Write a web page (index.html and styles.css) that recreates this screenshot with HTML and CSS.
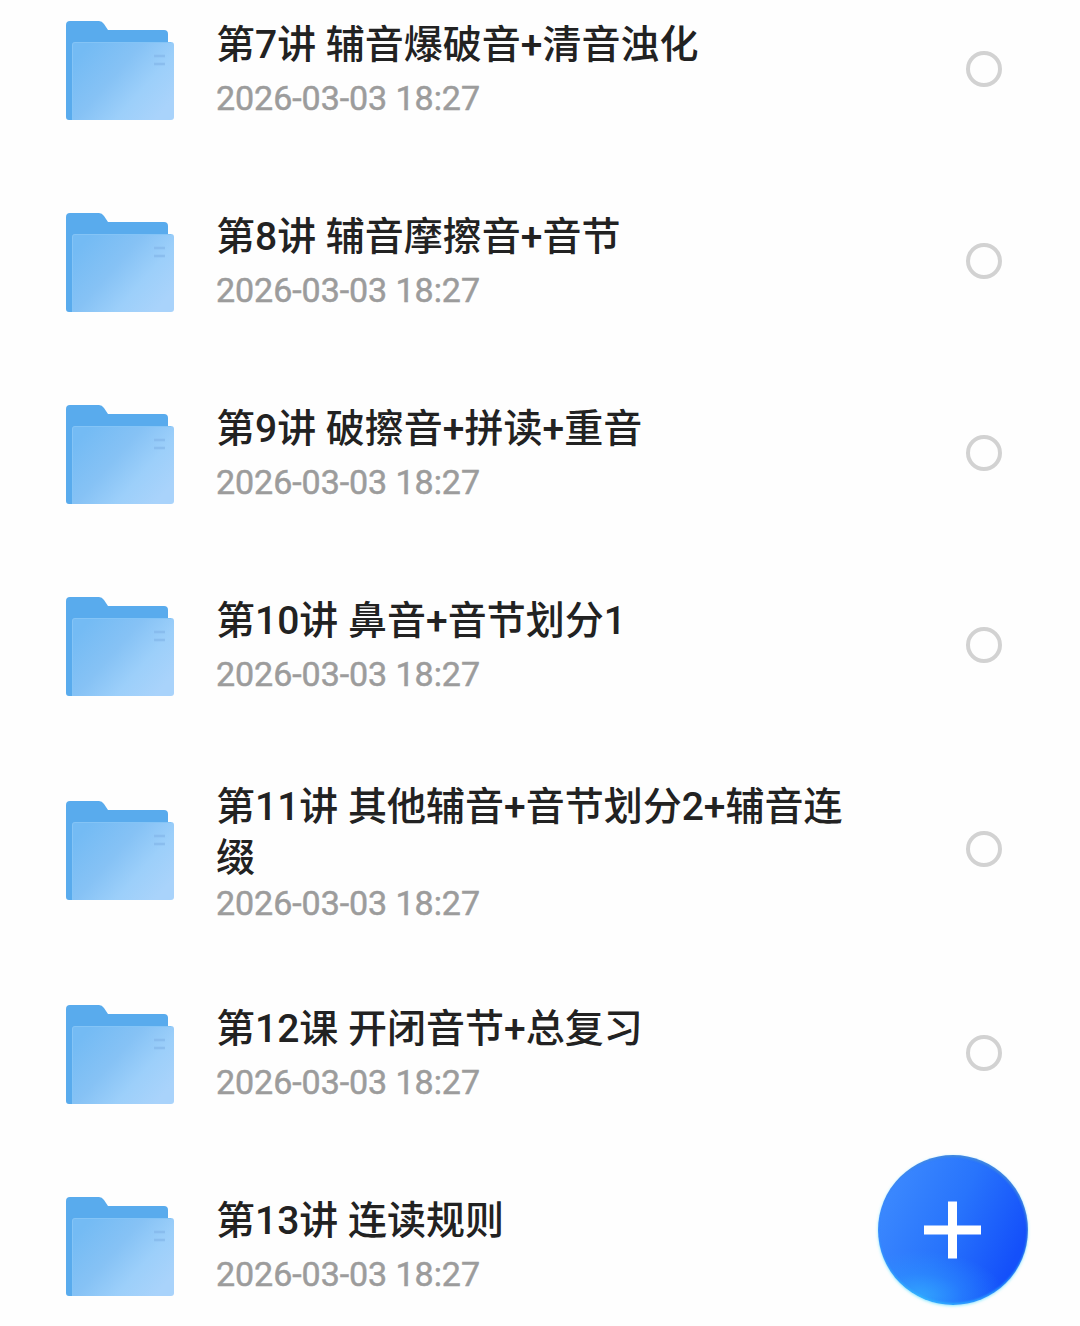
FILE: index.html
```html
<!DOCTYPE html>
<html lang="zh-CN">
<head>
  <meta charset="UTF-8">
  <title>文件列表</title>
  <link rel="stylesheet" href="styles.css">
</head>
<body>
  <svg class="defs" width="0" height="0">
    <defs>
      <linearGradient id="frontFill" x1="0.05" y1="0.2" x2="0.95" y2="0.8">
        <stop offset="0" stop-color="#74bbf4"/>
        <stop offset="0.4" stop-color="#86c2f5"/>
        <stop offset="0.7" stop-color="#9ccffa"/>
        <stop offset="1" stop-color="#a9d3fb"/>
      </linearGradient>
      <symbol id="folder" viewBox="0 0 108 100">
        <path d="M0 4Q0 0 4 0H33Q36 0 38 3L42 9H98Q102 9 102 13V99H3Q0 99 0 96Z" fill="#59abed"/>
        <path d="M6 24Q6 21 9 21H105Q108 21 108 24V96Q108 99 105 99H6Z" fill="url(#frontFill)"/>
        <path d="M6.5 99V24Q6.5 21.5 9 21.5H105" fill="none" stroke="#84c4f6" stroke-width="1"/>
        <path d="M88 35H99M88 43H99" stroke="#84b7ea" stroke-width="2.4" opacity="0.7"/>
      </symbol>
    </defs>
  </svg>

  <div class="list">
    <div class="row">
      <svg class="folder"><use href="#folder"/></svg>
      <div class="info">
        <div class="name">第7讲 辅音爆破音+清音浊化</div>
        <div class="date">2026-03-03 18:27</div>
      </div>
      <span class="check"></span>
    </div>
    <div class="row">
      <svg class="folder"><use href="#folder"/></svg>
      <div class="info">
        <div class="name">第8讲 辅音摩擦音+音节</div>
        <div class="date">2026-03-03 18:27</div>
      </div>
      <span class="check"></span>
    </div>
    <div class="row">
      <svg class="folder"><use href="#folder"/></svg>
      <div class="info">
        <div class="name">第9讲 破擦音+拼读+重音</div>
        <div class="date">2026-03-03 18:27</div>
      </div>
      <span class="check"></span>
    </div>
    <div class="row">
      <svg class="folder"><use href="#folder"/></svg>
      <div class="info">
        <div class="name">第10讲 鼻音+音节划分1</div>
        <div class="date">2026-03-03 18:27</div>
      </div>
      <span class="check"></span>
    </div>
    <div class="row row-tall">
      <svg class="folder"><use href="#folder"/></svg>
      <div class="info">
        <div class="name">第11讲 其他辅音+音节划分2+辅音连缀</div>
        <div class="date">2026-03-03 18:27</div>
      </div>
      <span class="check"></span>
    </div>
    <div class="row">
      <svg class="folder"><use href="#folder"/></svg>
      <div class="info">
        <div class="name">第12课 开闭音节+总复习</div>
        <div class="date">2026-03-03 18:27</div>
      </div>
      <span class="check"></span>
    </div>
    <div class="row">
      <svg class="folder"><use href="#folder"/></svg>
      <div class="info">
        <div class="name">第13讲 连读规则</div>
        <div class="date">2026-03-03 18:27</div>
      </div>
    </div>
  </div>

  <button class="add-btn" aria-label="新建">
    <svg width="58" height="58" viewBox="0 0 58 58">
      <path d="M28.5 .5V57.5M0 29H57" stroke="#fff" stroke-width="9"/>
    </svg>
  </button>
</body>
</html>
```
FILE: styles.css
```css
* {
  box-sizing: border-box;
}

body {
  margin: 0;
  height: 1326px;
  overflow: hidden;
  background: #fefefe;
  font-family: Roboto, "Noto Sans CJK SC", sans-serif;
}

.defs {
  display: block;
}

/* the list is scrolled, so the first row starts above the window */
.list {
  margin-top: -27px;
}

.row {
  display: flex;
  align-items: center;
  height: 192px;
  padding: 0 78px 0 66px;
}

.row-tall {
  height: 216px;
}

.folder {
  width: 108px;
  height: 100px;
  margin-top: 3px;
  flex-shrink: 0;
}

.info {
  width: 640px;
  margin-left: 42px;
}

.name {
  margin-bottom: 7px;
  color: #222;
  font-size: 39px;
  font-weight: 500;
  line-height: 51px;
}

.row-tall .name {
  margin-top: 7px;
  margin-bottom: -1px;
}

.date {
  color: #9c9c9c;
  font-size: 34px;
  line-height: 40px;
  letter-spacing: -0.05px;
  -webkit-text-stroke: 0.5px #9c9c9c;
}

.check {
  width: 36px;
  height: 36px;
  margin-left: auto;
  border: 4px solid #d2d2d2;
  border-radius: 50%;
}

.add-btn {
  position: fixed;
  right: 52px;
  bottom: 21px;
  display: flex;
  align-items: center;
  justify-content: center;
  width: 150px;
  height: 150px;
  padding: 0;
  border: none;
  border-radius: 50%;
  background:
    radial-gradient(ellipse 85px 45px at 28% 94%, rgba(52, 175, 255, 0.8) 0, rgba(45, 150, 255, 0.45) 50%, rgba(40, 130, 255, 0) 100%),
    linear-gradient(115deg, #3b88fe 12%, #2874fc 48%, #1450fa 84%);
  box-shadow: 0 1px 3px rgba(90, 225, 255, 0.7), inset -1px 2px 2px rgba(70, 140, 215, 0.8), inset 0 -2px 2px rgba(50, 190, 255, 0.6);
}
```
